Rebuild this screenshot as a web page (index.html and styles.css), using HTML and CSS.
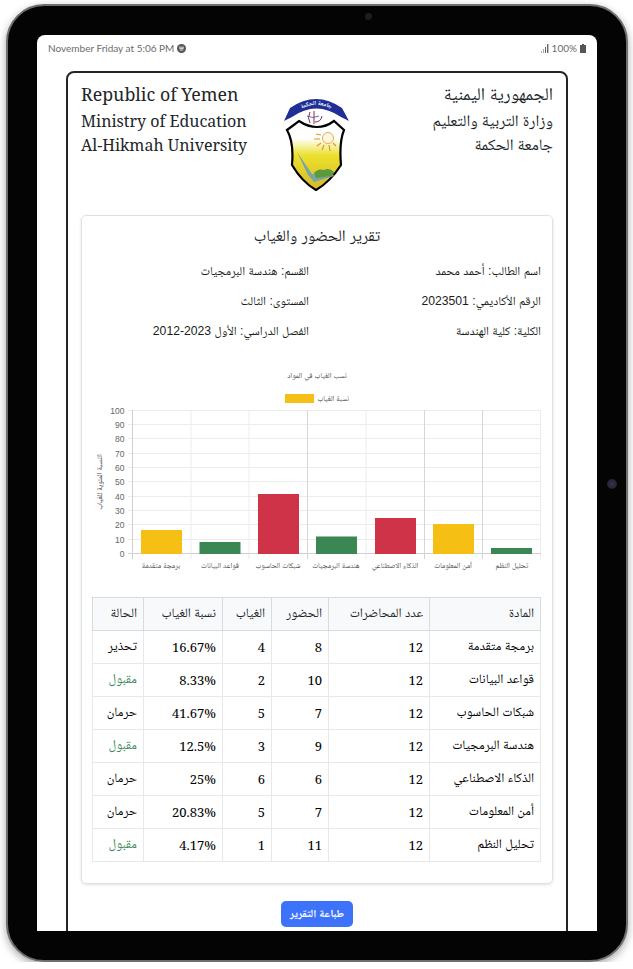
FILE: index.html
```html
<!DOCTYPE html>
<html lang="ar">
<head>
  <meta charset="UTF-8">
  <meta name="viewport" content="width=device-width, initial-scale=1">
  <title>تقرير الحضور والغياب</title>
  <link rel="stylesheet" href="styles.css">
</head>
<body>

  <div class="tablet">
    <span class="camera-top"></span>
    <span class="camera-side"></span>

    <div class="screen">
      <div class="status-bar">
        <div class="status-left">
          <span>November Friday at 5:06 PM</span>
          <svg class="status-icon" width="9" height="9" viewBox="0 0 9 9">
            <circle cx="4.5" cy="4.5" r="4.5" fill="#555"/>
            <path d="M2 3.2h5M2.3 4.6h4.4M2.8 6h3.4" stroke="#fff" stroke-width=".8"/>
          </svg>
        </div>
        <div class="status-right">
          <svg width="8" height="9" viewBox="0 0 8 9">
            <path d="M0 7h1v2H0zM2 5h1v4H2z" fill="#aaa"/>
            <path d="M4 3h1v6H4zM6 0h1.4v9H6z" fill="#666"/>
          </svg>
          <span>100%</span>
          <svg width="6" height="9" viewBox="0 0 6 9">
            <path d="M2 0h2v1h2v8H0V1h2z" fill="#555"/>
          </svg>
        </div>
      </div>

      <div class="report">
        <header class="report-head">
          <div class="head-en">
            <h2>Republic of Yemen</h2>
            <p>Ministry of Education</p>
            <p>Al-Hikmah University</p>
          </div>

          <svg class="logo" width="66" height="94" viewBox="0 0 66 94">
            <defs>
              <linearGradient id="shieldFill" x1="0" y1="0" x2="0" y2="1">
                <stop offset="0.25" stop-color="#ffffff"/>
                <stop offset="0.5" stop-color="#ece02c"/>
                <stop offset="1" stop-color="#d6b82a"/>
              </linearGradient>
              <path id="ribbonCurve" d="M7 19 Q32 -3 58 19"/>
            </defs>
            <path d="M0 24 L6 11 Q32 -7 58 11 L65 24 L57 20 Q32 3 8 20 Z" fill="#1f2f96"/>
            <text class="logo-text"><textPath href="#ribbonCurve" startOffset="50%" text-anchor="middle">جامعة الحكمة</textPath></text>
            <path d="M3 33 L15 24 Q24 30 33 30 Q42 30 50 24 L60 33 Q55 45 57 68 Q46 85 32 93 Q18 85 8 68 Q10 45 3 33 Z" fill="url(#shieldFill)" stroke="#000" stroke-width="2.2"/>
            <path d="M26 15 q-3 6 0 11 M30 14 v13 M38 19 q-1 6 -7 6" fill="none" stroke="#8e2a4a" stroke-width="1"/>
            <path d="M23 19 q6 3 12 0" fill="none" stroke="#3b4aa0" stroke-width=".8"/>
            <circle cx="44" cy="41" r="5.500" fill="#fff8e0" stroke="#e0962e" stroke-width=".8"/>
            <path d="M37 38 l-5 -1 M36 42 h-6 M37 46 l-4 3 M40 48 l-2 5 M45 48 l1 6 M49 46 l3 3" stroke="#e0962e" stroke-width="1.2"/>
            <path d="M13 55 L28 77 L48 76 L50 79 L30 85 L24 78 Z" fill="#7aa5a6"/>
            <path d="M30 76 Q34 71 40 73 Q45 70 50 75 L48 79 L32 81 Z" fill="#5c9a3c"/>
          </svg>

          <div class="head-ar" dir="rtl">
            <h2>الجمهورية اليمنية</h2>
            <p>وزارة التربية والتعليم</p>
            <p>جامعة الحكمة</p>
          </div>
        </header>

        <section class="card" dir="rtl">
          <h3 class="card-title">تقرير الحضور والغياب</h3>

          <div class="info-grid">
            <div>اسم الطالب: أحمد محمد</div>
            <div>القسم: هندسة البرمجيات</div>
            <div>الرقم الأكاديمي: 2023501</div>
            <div>المستوى: الثالث</div>
            <div>الكلية: كلية الهندسة</div>
            <div>الفصل الدراسي: الأول 2023-2012</div>
          </div>

          <!-- chart: x 0 = page 93, y 0 = page 365 -->
          <svg class="chart" width="448" height="212" viewBox="0 0 448 212" dir="rtl">
            <text class="chart-title" x="224" y="14" text-anchor="middle">نسب الغياب في المواد</text>
            <rect x="192" y="30" width="29" height="9" fill="#f5c013"/>
            <text class="chart-label" x="256" y="37" text-anchor="start">نسبة الغياب</text>

            <g class="grid-h">
              <path d="M35 46.500H448M35 60.500H448M35 74.500H448M35 89.500H448M35 103.500H448M35 117.500H448M35 132.500H448M35 146.500H448M35 160.500H448M35 175.500H448"/>
            </g>
            <g class="grid-v">
              <path d="M98 46V195M156 46V195M273 46V195M447.500 46V195"/>
            </g>
            <path class="grid-strong" d="M214.500 46V195M331.500 46V195M389.500 46V195"/>
            <path class="axis" d="M39.500 46V195M35 189.500H448"/>

            <g class="ticks">
              <text x="31.500" y="50">100</text>
              <text x="31.500" y="64">90</text>
              <text x="31.500" y="78">80</text>
              <text x="31.500" y="93">70</text>
              <text x="31.500" y="107">60</text>
              <text x="31.500" y="121">50</text>
              <text x="31.500" y="136">40</text>
              <text x="31.500" y="150">30</text>
              <text x="31.500" y="164">20</text>
              <text x="31.500" y="179">10</text>
              <text x="31.500" y="193">0</text>
            </g>

            <text class="chart-label" transform="translate(9 118) rotate(-90)" text-anchor="middle">النسبة المئوية للغياب</text>

            <g class="bar-yellow">
              <rect x="48" y="166" width="41" height="24"/>
              <rect x="340" y="160" width="41" height="30"/>
            </g>
            <g class="bar-green">
              <rect x="106.500" y="178" width="41" height="12"/>
              <rect x="223" y="172.500" width="41" height="17.500"/>
              <rect x="398" y="184" width="41" height="6"/>
            </g>
            <g class="bar-red">
              <rect x="165" y="130" width="41" height="60"/>
              <rect x="282" y="154" width="41" height="36"/>
            </g>

            <g class="cat-labels" text-anchor="middle">
              <text x="68" y="204">برمجة متقدمة</text>
              <text x="127" y="204">قواعد البيانات</text>
              <text x="185" y="204">شبكات الحاسوب</text>
              <text x="243" y="204">هندسة البرمجيات</text>
              <text x="302" y="204">الذكاء الاصطناعي</text>
              <text x="360" y="204">أمن المعلومات</text>
              <text x="419" y="204">تحليل النظم</text>
            </g>
          </svg>

          <table class="att-table">
            <colgroup>
              <col class="col-subject">
              <col class="col-total">
              <col class="col-present">
              <col class="col-absent">
              <col class="col-rate">
              <col class="col-status">
            </colgroup>
            <thead>
              <tr>
                <th>المادة</th>
                <th>عدد المحاضرات</th>
                <th>الحضور</th>
                <th>الغياب</th>
                <th>نسبة الغياب</th>
                <th>الحالة</th>
              </tr>
            </thead>
            <tbody>
              <tr>
                <td>برمجة متقدمة</td><td>12</td><td>8</td><td>4</td><td>16.67%</td><td>تحذير</td>
              </tr>
              <tr>
                <td>قواعد البيانات</td><td>12</td><td>10</td><td>2</td><td>8.33%</td><td class="ok">مقبول</td>
              </tr>
              <tr>
                <td>شبكات الحاسوب</td><td>12</td><td>7</td><td>5</td><td>41.67%</td><td>حرمان</td>
              </tr>
              <tr>
                <td>هندسة البرمجيات</td><td>12</td><td>9</td><td>3</td><td>12.5%</td><td class="ok">مقبول</td>
              </tr>
              <tr>
                <td>الذكاء الاصطناعي</td><td>12</td><td>6</td><td>6</td><td>25%</td><td>حرمان</td>
              </tr>
              <tr>
                <td>أمن المعلومات</td><td>12</td><td>7</td><td>5</td><td>20.83%</td><td>حرمان</td>
              </tr>
              <tr>
                <td>تحليل النظم</td><td>12</td><td>11</td><td>1</td><td>4.17%</td><td class="ok">مقبول</td>
              </tr>
            </tbody>
          </table>
        </section>

        <div class="actions">
          <button type="button" class="print-btn">طباعة التقرير</button>
        </div>
      </div>
    </div>
  </div>

</body>
</html>
```

FILE: styles.css
```css
* {
  box-sizing: border-box;
}
body {
  margin: 0;
  background-color: #fff;
  font-family: 'Liberation Sans', 'Noto Naskh Arabic', sans-serif;
}
.tablet {
  position: relative;
  width: 622px;
  height: 958px;
  margin: 4px 0 0 6px;
  padding: 29px 29px 0 29px;
  background: #040404;
  border: 2px solid #6e6e74;
  border-radius: 38px;
  box-shadow: 0 3px 8px rgba(0, 0, 0, 0.35);
}
.camera-top {
  position: absolute;
  left: 357px;
  top: 7px;
  width: 7px;
  height: 7px;
  border-radius: 50%;
  background: #1d1d20;
}
.camera-side {
  position: absolute;
  right: 9px;
  top: 473px;
  width: 10px;
  height: 10px;
  border-radius: 50%;
  background: radial-gradient(circle, #2a2f78 0, #2a2a30 45%, #1a1a1c 100%);
}
.screen {
  height: 896px;
  overflow: hidden;
  background: #fff;
  border-radius: 8px 8px 0 0;
}
.status-bar {
  display: flex;
  justify-content: space-between;
  align-items: center;
  height: 26px;
  padding: 0 11px;
  margin-bottom: 10px;
  font-family: 'Lato', sans-serif;
  font-size: 10px;
  color: #6c6c6c;
}
.status-left,
.status-right {
  display: flex;
  align-items: center;
  gap: 3px;
}
.report {
  margin: 0 29px;
  padding: 0 13px;
  border: 2px solid #212529;
  border-radius: 8px;
  min-height: 900px;
}
.report-head {
  display: flex;
  justify-content: space-between;
  height: 142px;
  padding-top: 8px;
  color: #212529;
  font-family: 'Noto Serif', 'Noto Naskh Arabic', serif;
}
.head-en,
.head-ar {
  width: 170px;
}
.head-ar {
  margin-top: -1px;
}
.report-head h2 {
  margin: 0 0 1px;
  font-size: 17.800px;
  font-weight: normal;
  line-height: 27px;
}
.report-head p {
  margin: 0;
  font-size: 16px;
  line-height: 24px;
}
.logo {
  margin-top: 16px;
  flex-shrink: 0;
}
.logo-text {
  font-size: 6px;
  fill: #fff;
  font-weight: bold;
}
.card {
  height: 669px;
  padding: 0 11px;
  border: 1px solid #dee2e6;
  border-radius: 5px;
  box-shadow: 0 1px 3px rgba(0, 0, 0, 0.12);
}
.card-title {
  margin: 0;
  height: 40px;
  font-size: 16px;
  font-weight: normal;
  line-height: 40px;
  text-align: center;
  color: #212529;
}
.info-grid {
  display: grid;
  grid-template-columns: 1fr 1fr;
  column-gap: 16px;
  font-size: 12.200px;
  line-height: 30px;
  color: #1a1d20;
}
.chart {
  display: block;
  margin-top: 18px;
}
.chart-title,
.chart-label,
.cat-labels {
  font-size: 7.500px;
  fill: #444;
}
.ticks {
  font-family: 'Liberation Sans', sans-serif;
  font-size: 8.500px;
  fill: #666;
  direction: ltr;
  text-anchor: end;
}
.grid-h path,
.grid-v path {
  stroke: #ececec;
  stroke-width: 1;
  fill: none;
}
.grid-strong {
  stroke: #d6d6d6;
  fill: none;
}
.axis {
  stroke: #d0d0d0;
  fill: none;
}
.bar-yellow rect {
  fill: #f5c013;
}
.bar-green rect {
  fill: #3a8753;
}
.bar-red rect {
  fill: #cf3348;
}
.att-table {
  width: 448px;
  margin-top: 21px;
  table-layout: fixed;
  border-collapse: collapse;
  font-family: 'Noto Serif', 'Noto Naskh Arabic', serif;
  font-size: 13px;
  color: #000;
}
.att-table th,
.att-table td {
  height: 33px;
  padding: 0 6px;
  border: 1px solid #e6e8ea;
  text-align: right;
  font-weight: normal;
}
.att-table th {
  background: #f8f9fa;
  border-color: #d9dcdf;
  color: #212529;
}
.att-table td.ok {
  color: #3f8a5c;
}
.col-subject { width: 111px; }
.col-total { width: 101px; }
.col-present { width: 57px; }
.col-absent { width: 49px; }
.col-rate { width: 79px; }
.col-status { width: 51px; }
.actions {
  display: flex;
  justify-content: center;
  padding-top: 17px;
}
.print-btn {
  width: 72px;
  height: 26px;
  padding: 0;
  background-color: #3d72fb;
  color: white;
  border: none;
  border-radius: 5px;
  font-family: inherit;
  font-size: 11px;
  font-weight: bold;
}
```
